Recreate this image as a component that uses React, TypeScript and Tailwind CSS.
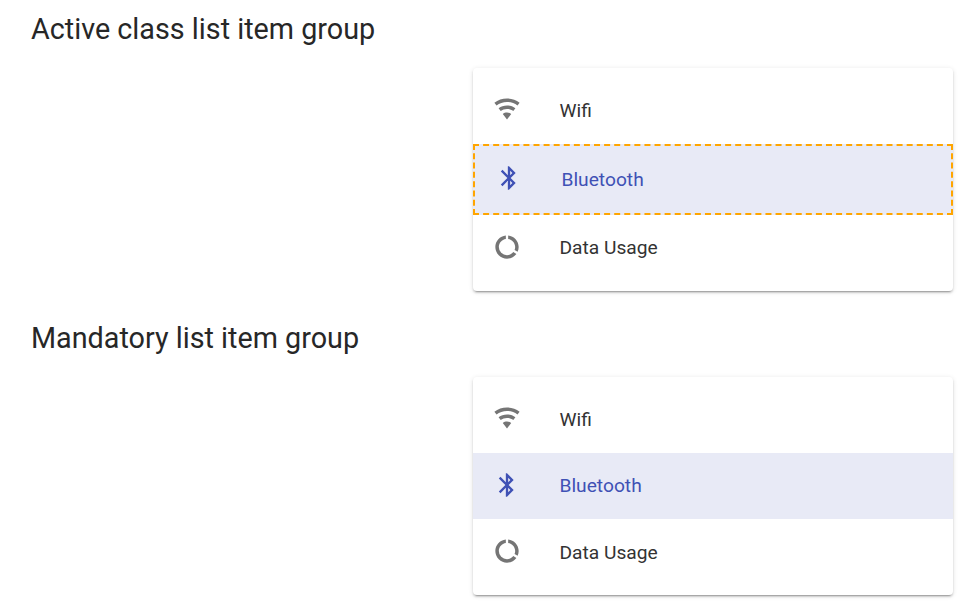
const wifi = "M12,21L15.6,16.2C14.6,15.45 13.35,15 12,15C10.65,15 9.4,15.45 8.4,16.2L12,21M12,3C7.95,3 4.21,4.34 1.2,6.6L3,9C5.5,7.12 8.62,6 12,6C15.38,6 18.5,7.12 21,9L22.8,6.6C19.79,4.34 16.05,3 12,3M12,9C9.3,9 6.81,9.89 4.8,11.4L6.6,13.8C8.1,12.67 9.97,12 12,12C14.03,12 15.9,12.67 17.4,13.8L19.2,11.4C17.19,9.89 14.7,9 12,9Z";
const bluetooth = "M14.88,16.29L13,18.17V14.41M13,5.83L14.88,7.71L13,9.58M17.71,7.71L12,2H11V9.58L6.41,5L5,6.41L10.59,12L5,17.58L6.41,19L11,14.41V22H12L17.71,16.29L13.41,12L17.71,7.71Z";
const usage = "M13,2.05V5.08C16.39,5.57 19,8.47 19,12C19,12.9 18.82,13.75 18.5,14.54L21.12,16.07C21.68,14.83 22,13.45 22,12C22,6.82 18.05,2.55 13,2.05M12,19A7,7 0 0,1 5,12C5,8.47 7.61,5.57 11,5.08V2.05C5.94,2.55 2,6.81 2,12A10,10 0 0,0 12,22C15.3,22 18.23,20.39 20.05,17.91L17.45,16.38C16.17,18 14.21,19 12,19Z";

function Item({ icon, label, className }: { icon: string; label: string; className: string }) {
  return (
    <div className={`flex items-center pl-5 ${className}`}>
      <svg viewBox="0 0 24 24" className="size-7 shrink-0 fill-current">
        <path d={icon} />
      </svg>
      <span className="ml-[38.5px] text-[19.2px] leading-6 font-normal">{label}</span>
    </div>
  );
}

export default function App() {
  return (
    <main className="h-[610px] w-[973px] overflow-hidden bg-white pt-[10px] font-[Roboto,sans-serif] text-[#272727]">
      <h2 className="ml-[31px] h-[58px] text-[28.75px] leading-[38px] font-normal">Active class list item group</h2>
      <div className="ml-[473px] h-[223px] w-[480px] rounded-[4px] bg-white pt-[10px] shadow-[0_3px_1px_-2px_rgba(0,0,0,.2),0_2px_2px_0_rgba(0,0,0,.14),0_1px_5px_0_rgba(0,0,0,.12)]">
        <Item icon={wifi} label="Wifi" className="h-[66px] text-[#333333] [&>svg]:-mt-1 [&>svg]:text-[#757575]" />
        <Item icon={bluetooth} label="Bluetooth" className="h-[71px] border-2 border-dashed border-[#ffa500] bg-[#e8eaf6] text-[#3f51b5] [&>svg]:-mt-[3px]" />
        <Item icon={usage} label="Data Usage" className="h-[66px] text-[#333333] [&>svg]:-mt-[2px] [&>svg]:text-[#757575]" />
      </div>
      <h2 className="mt-[28px] ml-[31px] h-[58px] text-[28.75px] leading-[38px] font-normal">Mandatory list item group</h2>
      <div className="ml-[473px] h-[218px] w-[480px] rounded-[4px] bg-white pt-[10px] shadow-[0_3px_1px_-2px_rgba(0,0,0,.2),0_2px_2px_0_rgba(0,0,0,.14),0_1px_5px_0_rgba(0,0,0,.12)]">
        <Item icon={wifi} label="Wifi" className="h-[66px] text-[#333333] [&>svg]:-mt-1 [&>svg]:text-[#757575]" />
        <Item icon={bluetooth} label="Bluetooth" className="h-[66px] bg-[#e8eaf6] text-[#3f51b5] [&>svg]:-mt-[2px]" />
        <Item icon={usage} label="Data Usage" className="h-[68px] text-[#333333] [&>svg]:-mt-1 [&>svg]:text-[#757575]" />
      </div>
    </main>
  );
}
